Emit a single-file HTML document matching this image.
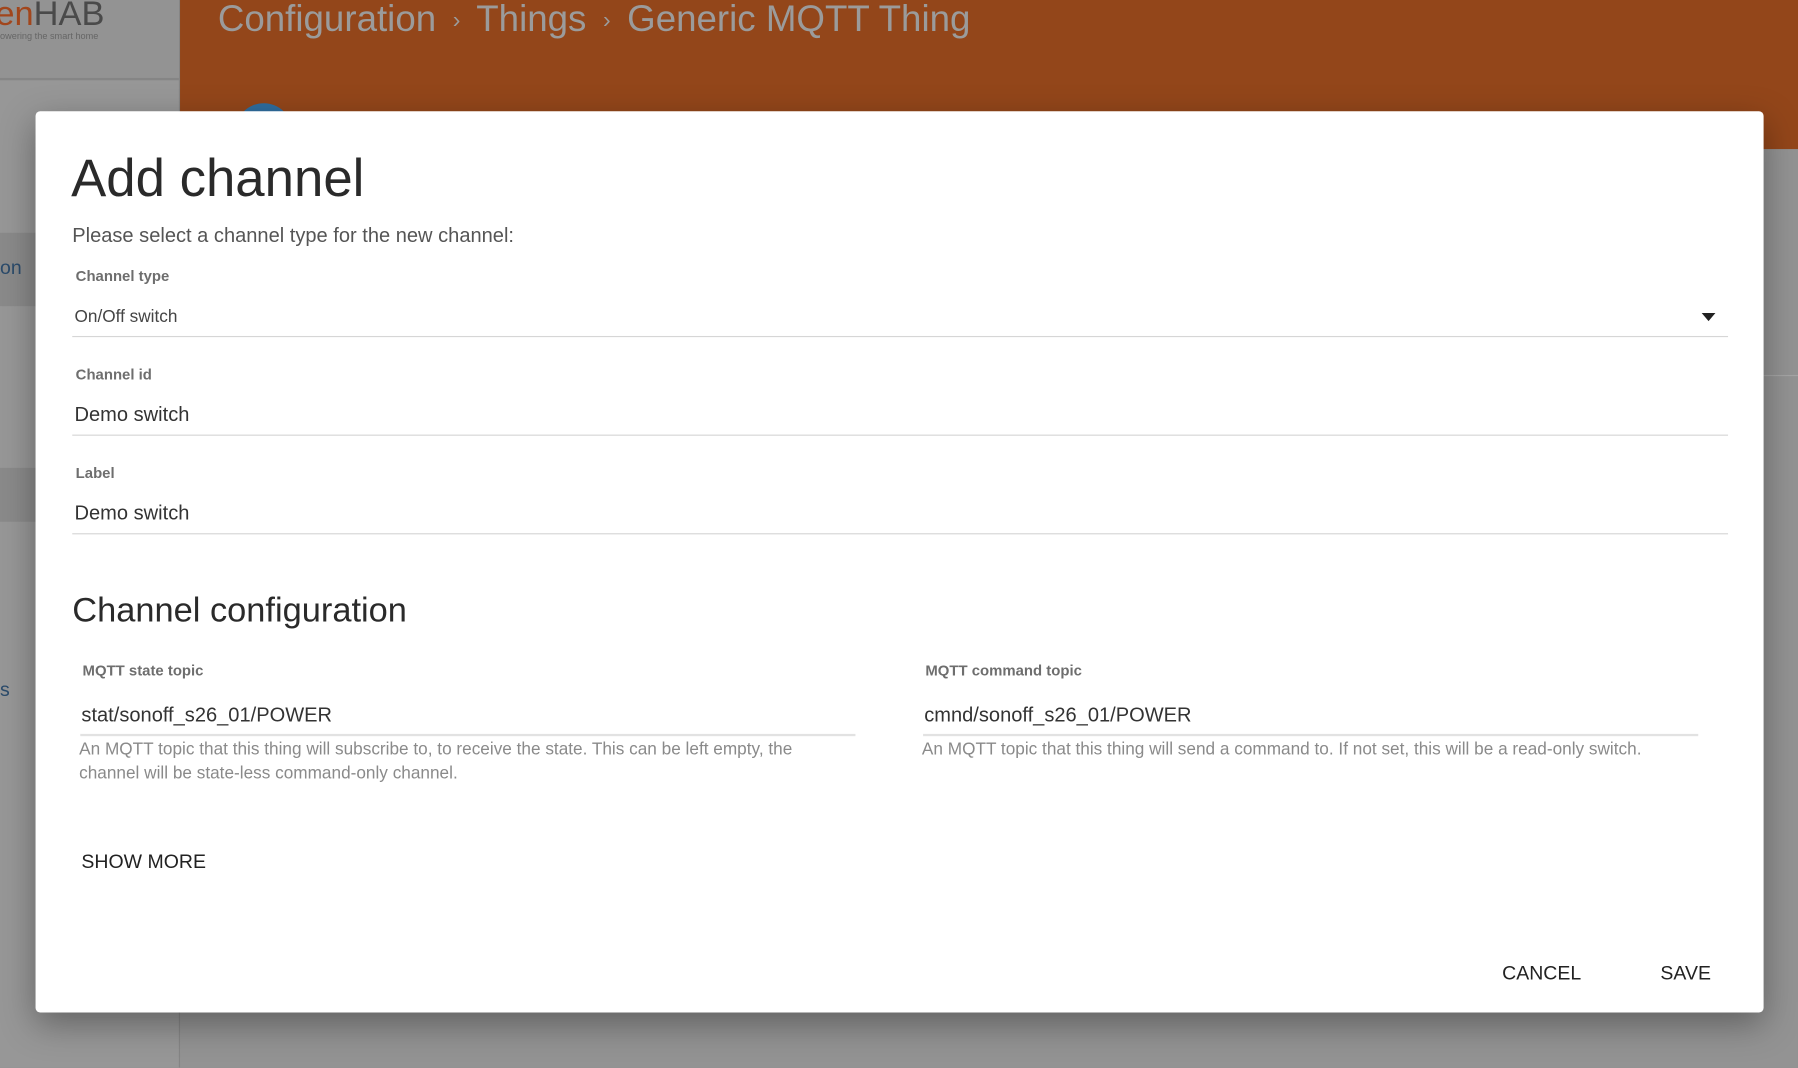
<!DOCTYPE html>
<html><head><meta charset="utf-8"><style>
html,body{margin:0;padding:0;width:1798px;height:1068px;overflow:hidden;background:#939393;font-family:"Liberation Sans",sans-serif;}
#w{position:absolute;left:0;top:0;width:1568px;height:931px;transform:scale(1.14668);transform-origin:0 0;background:#939393;}
.a{position:absolute;white-space:nowrap;}
.lbl{font-size:13px;font-weight:bold;color:#6e6e6e;}
.val{font-size:17.5px;color:#333;}
.line{position:absolute;height:1px;background:#d6d6d6;}
.help{font-size:15px;color:#8a8a8a;line-height:21px;}
.btn{font-size:17px;color:#222;}
</style></head><body><div id="w">
<div class="a" style="left:0;top:0;width:156px;height:931px;background:#979797;border-right:1px solid #858585;"></div>
<div class="a" style="left:0;top:0;width:156px;height:68px;background:#939393;border-bottom:2px solid #858585;"></div>
<div class="a" style="left:-4px;top:-4px;font-size:30px;color:#a2461c;">en<span style="color:#4a4a4a">HAB</span></div>
<div class="a" style="left:0;top:27px;font-size:8px;color:#666;">owering the smart home</div>
<div class="a" style="left:0;top:203px;width:156px;height:64px;background:#8a8a8a;"></div>
<div class="a" style="left:0;top:224px;font-size:17px;color:#2b4b6b;">on</div>
<div class="a" style="left:0;top:408px;width:156px;height:47px;background:#8a8a8a;"></div>
<div class="a" style="left:0;top:592px;font-size:17px;color:#2b4b6b;">s</div>
<div class="a" style="left:157px;top:0;width:1411px;height:130px;background:#93461a;"></div>
<div class="a" style="left:1538px;top:327px;width:30px;height:1px;background:#a5a5a5;"></div>
<div class="a" style="left:190px;top:-2px;font-size:32px;color:#9b9b9b;">Configuration <span style="font-size:20px;vertical-align:middle;">&nbsp;&rsaquo;&nbsp;</span> Things <span style="font-size:20px;vertical-align:middle;">&nbsp;&rsaquo;&nbsp;</span> Generic MQTT Thing</div>
<div class="a" style="left:205px;top:90px;width:50px;height:50px;border-radius:50%;background:#2f6d9e;"></div>
<div class="a" style="left:31px;top:97px;width:1507px;height:786px;background:#fff;border-radius:4px;box-shadow:0 10px 30px rgba(0,0,0,.35);">
 <div class="a" style="left:31px;top:31px;font-size:46px;color:#2a2a2a;">Add channel</div>
 <div class="a" style="left:32px;top:98px;font-size:17.5px;color:#555;">Please select a channel type for the new channel:</div>
 <div class="a lbl" style="left:35px;top:136px;">Channel type</div>
 <div class="a" style="left:34px;top:171px;font-size:15px;color:#444;">On/Off switch</div>
 <div class="a" style="left:1453px;top:176px;width:0;height:0;border-left:6px solid transparent;border-right:6px solid transparent;border-top:7px solid #222;"></div>
 <div class="line" style="left:32px;top:196px;width:1444px;"></div>
 <div class="a lbl" style="left:35px;top:222px;">Channel id</div>
 <div class="a val" style="left:34px;top:254px;">Demo switch</div>
 <div class="line" style="left:32px;top:282px;width:1444px;"></div>
 <div class="a lbl" style="left:35px;top:308px;">Label</div>
 <div class="a val" style="left:34px;top:340px;">Demo switch</div>
 <div class="line" style="left:32px;top:368px;width:1444px;"></div>
 <div class="a" style="left:32px;top:419px;font-size:30px;color:#2a2a2a;">Channel configuration</div>
 <div class="a lbl" style="left:41px;top:480px;">MQTT state topic</div>
 <div class="a val" style="left:40px;top:516px;">stat/sonoff_s26_01/POWER</div>
 <div class="line" style="left:39px;top:543px;width:676px;height:2px;background:#e2e2e2;"></div>
 <div class="a help" style="left:38px;top:546px;white-space:normal;width:640px;">An MQTT topic that this thing will subscribe to, to receive the state. This can be left empty, the channel will be state-less command-only channel.</div>
 <div class="a lbl" style="left:776px;top:480px;">MQTT command topic</div>
 <div class="a val" style="left:775px;top:516px;">cmnd/sonoff_s26_01/POWER</div>
 <div class="line" style="left:774px;top:543px;width:676px;height:2px;background:#e2e2e2;"></div>
 <div class="a help" style="left:773px;top:546px;">An MQTT topic that this thing will send a command to. If not set, this will be a read-only switch.</div>
 <div class="a btn" style="left:40px;top:645px;">SHOW MORE</div>
 <div class="a btn" style="left:1279px;top:742px;">CANCEL</div>
 <div class="a btn" style="left:1417px;top:742px;">SAVE</div>
</div>
</div></body></html>
